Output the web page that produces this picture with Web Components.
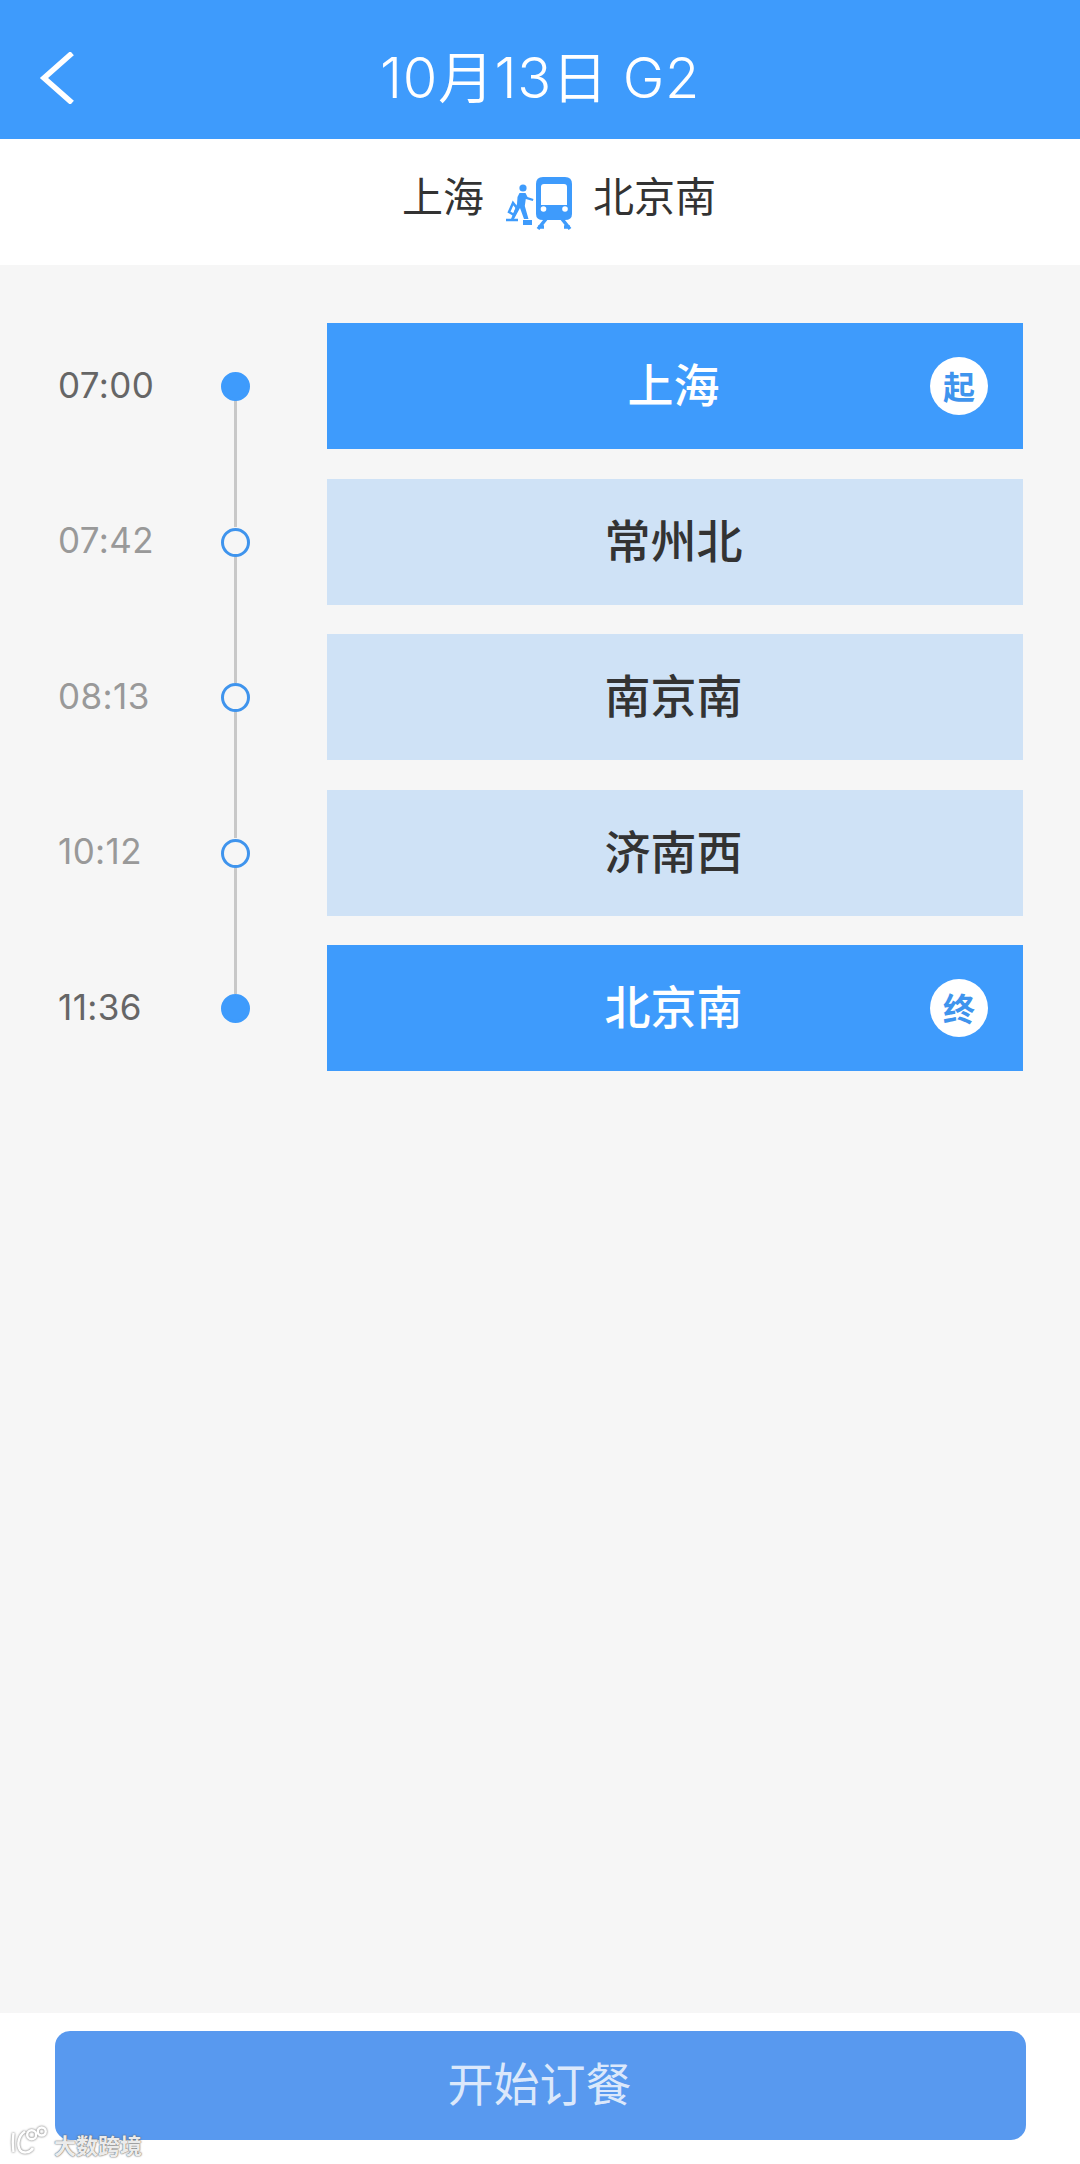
<!DOCTYPE html>
<html lang="zh">
<head>
<meta charset="utf-8">
<title>G2</title>
<style>
  html, body { margin: 0; padding: 0; background: #f6f6f6; }
  body { font-family: "Noto Sans CJK SC", sans-serif; }
</style>
</head>
<body>
<order-page>
  <trip-header slot="top" title-text="10月13日 G2"></trip-header>
  <route-bar slot="top" from="上海" to="北京南"></route-bar>
  <stop-row time="07:00" name="上海" badge="起" kind="end"></stop-row>
  <stop-row time="07:42" name="常州北"></stop-row>
  <stop-row time="08:13" name="南京南"></stop-row>
  <stop-row time="10:12" name="济南西"></stop-row>
  <stop-row time="11:36" name="北京南" badge="终" kind="end" last></stop-row>
  <order-footer slot="bottom" label="开始订餐"></order-footer>
</order-page>

<script>
const CJK = '"Noto Sans CJK SC", sans-serif';

class OrderPage extends HTMLElement {
    connectedCallback() {
        this.attachShadow({ mode: 'open' });
        this.shadowRoot.innerHTML = `
            <style>
                :host { display: flex; flex-direction: column; height: 2164px; background: #f6f6f6; }
                .stops {
                    flex: 1;
                    display: flex;
                    flex-direction: column;
                    gap: 29.5px;
                    padding: 58px 57px 0 58px;
                }
            </style>
            <slot name="top"></slot>
            <div class="stops"><slot></slot></div>
            <slot name="bottom"></slot>
        `;
    }
}

class TripHeader extends HTMLElement {
    connectedCallback() {
        this.attachShadow({ mode: 'open' });
        this.shadowRoot.innerHTML = `
            <style>
                :host { display: block; }
                .bar {
                    height: 139px;
                    background: #3e9bfc;
                    display: grid;
                    grid-template-columns: 1fr auto 1fr;
                    align-items: center;
                    color: #fff;
                }
                .back { display: block; margin: 17px 0 0 38px; }
                .title {
                    font: 350 56px "Inter", ${CJK};
                    letter-spacing: 0.6px;
                    word-spacing: -2px;
                    line-height: 60px;
                    padding-top: 16px;
                }
            </style>
            <div class="bar">
                <svg class="back" width="36" height="52" viewBox="0 0 36 52" fill="none">
                    <path d="M32 3 L6 26 L32 49" stroke="#fff" stroke-width="5.500" stroke-linecap="square" fill="none"/>
                </svg>
                <div class="title">${this.getAttribute('title-text')}</div>
                <span></span>
            </div>
        `;
    }
}

class RouteBar extends HTMLElement {
    connectedCallback() {
        this.attachShadow({ mode: 'open' });
        this.shadowRoot.innerHTML = `
            <style>
                :host { display: block; }
                .bar {
                    height: 126px;
                    background: #fff;
                    display: flex;
                    justify-content: center;
                    align-items: center;
                    gap: 20px;
                    padding-left: 38px;
                    box-sizing: border-box;
                    color: #333;
                    font: 400 41px/1 ${CJK};
                }
                span { margin-top: -15px; }
                svg { display: block; margin-top: 4px; }
            </style>
            <div class="bar">
                <span>${this.getAttribute('from')}</span>
                <svg width="69" height="54" viewBox="0 0 69 54">
                    <!-- train -->
                    <path fill="#3e9bfc" fill-rule="evenodd" d="M39 0h22q7 0 7 7v30q0 6-7 6H39q-7 0-7-6V7q0-7 7-7ZM40 7q-3 0-3 3v18h26V10q0-3-3-3Z"/>
                    <circle cx="39.500" cy="32" r="2.800" fill="#fff"/>
                    <circle cx="61" cy="32" r="2.800" fill="#fff"/>
                    <path fill="none" stroke="#3e9bfc" stroke-width="3.500" d="M42 42l-8 10M34 50h6M58 42l8 10M60 50h6"/>
                    <!-- passenger -->
                    <circle cx="19" cy="11" r="3.600" fill="#3e9bfc"/>
                    <path fill="#3e9bfc" d="M15.500 16h6l2 4 6 2-.7 2-7-2-1 7 3.700 13H20l-4-11-6 11H7l6-15 .5-7Z"/>
                    <path fill="none" stroke="#3e9bfc" stroke-width="2.500" d="M9 26l-4 9 5 3 3-7ZM2 43h12"/>
                    <path fill="#3e9bfc" d="M19 43h9v5h-9Z"/>
                </svg>
                <span>${this.getAttribute('to')}</span>
            </div>
        `;
    }
}

class StopRow extends HTMLElement {
    connectedCallback() {
        const isEnd = this.getAttribute('kind') === 'end';
        const badge = this.getAttribute('badge');
        this.attachShadow({ mode: 'open' });
        this.shadowRoot.innerHTML = `
            <style>
                :host { display: block; }
                .row {
                    display: grid;
                    grid-template-columns: 164px 105px 1fr;
                    align-items: center;
                    height: 126px;
                }
                .time {
                    font: 400 35px/1 "Inter", sans-serif;
                    letter-spacing: 0.4px;
                    color: ${isEnd ? '#666' : '#999'};
                    padding-bottom: 2px;
                }
                .node { position: relative; height: 126px; }
                .dot {
                    position: absolute;
                    left: -1px;
                    top: 49px;
                    width: 29px;
                    height: 29px;
                    box-sizing: border-box;
                    border-radius: 50%;
                    border: 3px solid #3f94ed;
                    background: #f6f6f6;
                }
                .dot.on { background: #3e9bfc; border-color: #3e9bfc; }
                .line {
                    position: absolute;
                    left: 12px;
                    top: 77px;
                    width: 3px;
                    height: 127px;
                    background: #c8c8c8;
                }
                .card {
                    position: relative;
                    height: 126px;
                    box-sizing: border-box;
                    padding: 0 3px 8px 0;
                    display: flex;
                    align-items: center;
                    justify-content: center;
                    font: 500 46px/1 ${CJK};
                    background: ${isEnd ? '#3e9bfc' : '#cfe2f6'};
                    color: ${isEnd ? '#fff' : '#333'};
                }
                .badge {
                    position: absolute;
                    right: 35px;
                    top: 34px;
                    width: 58px;
                    height: 58px;
                    border-radius: 50%;
                    background: #fff;
                    color: #3f94ed;
                    font: 700 32px/56px ${CJK};
                    text-align: center;
                }
            </style>
            <div class="row">
                <div class="time">${this.getAttribute('time')}</div>
                <div class="node">
                    ${this.hasAttribute('last') ? '' : '<div class="line"></div>'}
                    <div class="dot ${isEnd ? 'on' : ''}"></div>
                </div>
                <div class="card">
                    ${this.getAttribute('name')}
                    ${badge ? `<span class="badge">${badge}</span>` : ''}
                </div>
            </div>
        `;
    }
}

class OrderFooter extends HTMLElement {
    connectedCallback() {
        this.attachShadow({ mode: 'open' });
        this.shadowRoot.innerHTML = `
            <style>
                :host { display: block; position: relative; }
                .wrap { background: #fff; height: 151px; padding: 18px 54px 0 55px; box-sizing: border-box; }
                .btn {
                    height: 109px;
                    box-sizing: border-box;
                    padding: 0 2px 10px 0;
                    border-radius: 15px;
                    background: #5899ef;
                    color: #dbe8fb;
                    display: flex;
                    align-items: center;
                    justify-content: center;
                    font: 400 46px/1 ${CJK};
                }
                .mark {
                    position: absolute;
                    left: 10px;
                    bottom: 8px;
                    display: flex;
                    align-items: center;
                    gap: 6px;
                    color: rgba(255,255,255,.9);
                    font: 700 22px/1 ${CJK};
                    text-shadow: 0 0 2px #666, 0 0 1px #666;
                }
                .mark span { padding-top: 6px; }
                .mark svg { display: block; filter: drop-shadow(0 0 1px #666); }
            </style>
            <div class="wrap"><div class="btn">${this.getAttribute('label')}</div></div>
            <div class="mark">
                <svg width="38" height="30" viewBox="0 0 38 30" fill="none" stroke="#fff" stroke-width="2.500">
                    <path d="M3.500 7c-1 6-1 13 0 19M15 5.500C8 10 7 19 10 24c3 4 10 3 13-2"/>
                    <circle cx="21.700" cy="8.700" r="4.500"/>
                    <circle cx="31.700" cy="5.500" r="4"/>
                </svg>
                <span>大数跨境</span>
            </div>
        `;
    }
}

customElements.define('order-page', OrderPage);
customElements.define('trip-header', TripHeader);
customElements.define('route-bar', RouteBar);
customElements.define('stop-row', StopRow);
customElements.define('order-footer', OrderFooter);
</script>
</body>
</html>
